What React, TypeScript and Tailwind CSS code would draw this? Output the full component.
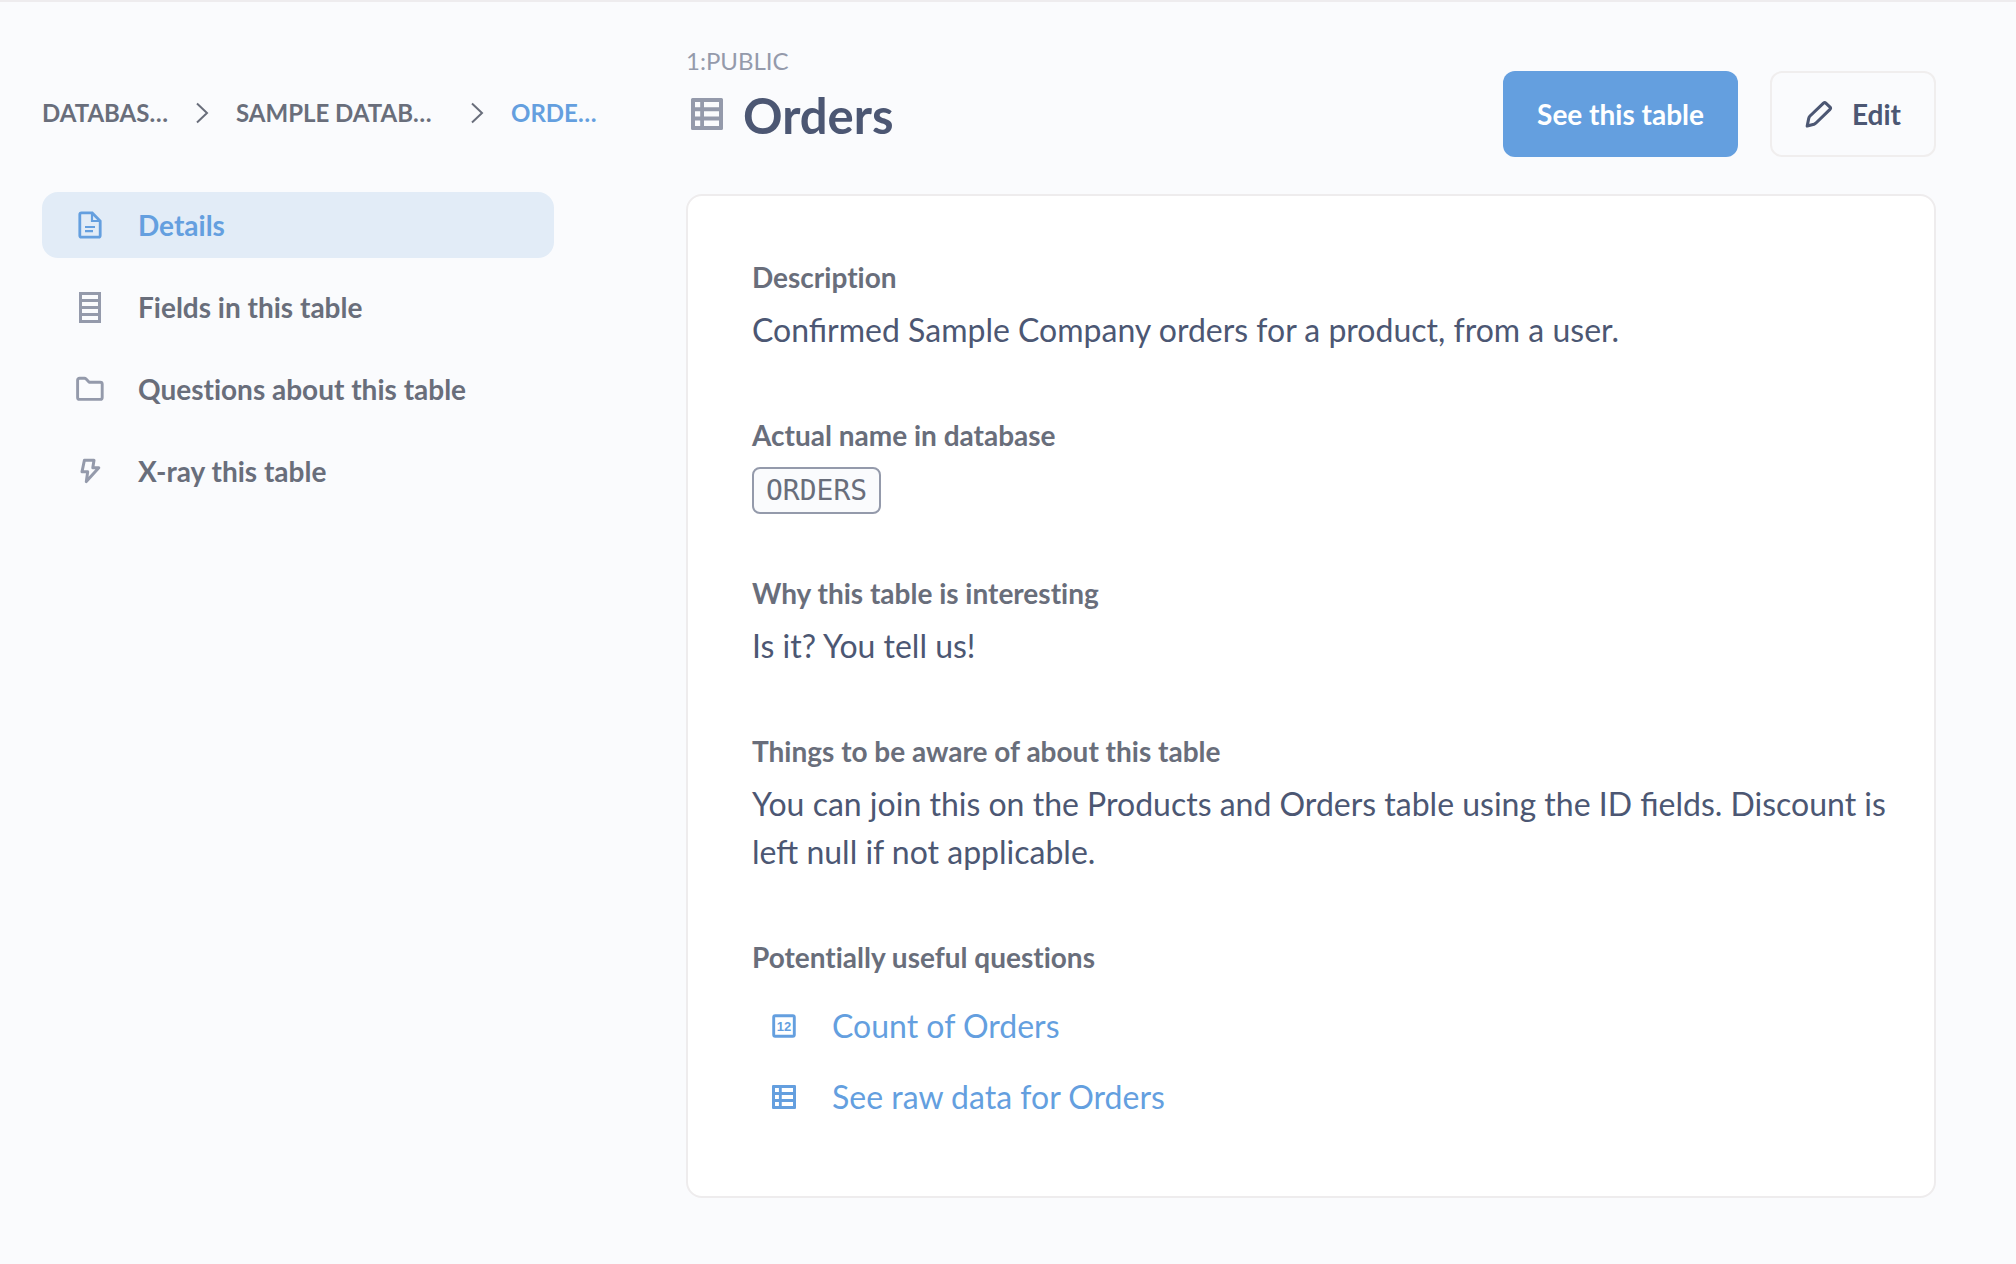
import type { ReactNode } from "react";

function TableIcon({ className }: { className: string }) {
  return (
    <svg viewBox="0 0 32 32" className={className} fill="currentColor" aria-hidden="true">
      <path
        fillRule="evenodd"
        d="M1.5 0h29A1.5 1.5 0 0 1 32 1.5v29a1.5 1.5 0 0 1-1.5 1.5h-29A1.5 1.5 0 0 1 0 30.500V1.500A1.500 1.500 0 0 1 1.500 0ZM4 4v5.300h5.200V4ZM13 4v5.300h15V4ZM4 13.300v5.200h5.200v-5.200ZM13 13.300v5.200h15v-5.200ZM4 22.500V28h5.200v-5.500ZM13 22.500V28h15v-5.500Z"
      />
    </svg>
  );
}

function NumberIcon() {
  return (
    <svg viewBox="0 0 24 24" className="size-6" aria-hidden="true">
      <rect x="1.700" y="1.700" width="20.600" height="20.600" rx="1.500" fill="none" stroke="currentColor" strokeWidth="2.900" />
      <text x="12" y="16.600" textAnchor="middle" fontSize="13" className="font-['Liberation_Sans',sans-serif] font-bold" fill="currentColor">
        12
      </text>
    </svg>
  );
}

function DocumentIcon() {
  return (
    <svg viewBox="0 0 32 32" className="size-8" fill="none" stroke="currentColor" strokeWidth="2.800" aria-hidden="true">
      <path d="M7.500 3.900h10.700l8 8.200v14.400a1.700 1.700 0 0 1-1.700 1.700h-17a1.700 1.700 0 0 1-1.700-1.700V5.600a1.700 1.700 0 0 1 1.700-1.700Z" />
      <path d="M18 4v8h8" strokeWidth="2.200" />
      <path d="M11 18h10M11 22.200h8" strokeWidth="2.200" />
    </svg>
  );
}

function FieldsIcon() {
  return (
    <svg viewBox="0 0 32 32" className="size-8" fill="none" stroke="currentColor" strokeWidth="3" aria-hidden="true">
      <path d="M6.500 2.500h19v28h-19ZM6.500 9.500h19M6.500 16.500h19M6.500 23.500h19" />
    </svg>
  );
}

function FolderIcon() {
  return (
    <svg viewBox="0 0 32 32" className="size-8" fill="none" stroke="currentColor" strokeWidth="2.900" strokeLinejoin="round" aria-hidden="true">
      <path d="M3.600 7.200a1.900 1.900 0 0 1 1.900-1.900h4.900q1 0 1.700.7l3.100 3.200h11.100a1.900 1.900 0 0 1 1.900 1.900v13.400a1.900 1.900 0 0 1-1.900 1.900H5.500a1.900 1.900 0 0 1-1.900-1.900Z" />
    </svg>
  );
}

function BoltIcon() {
  return (
    <svg viewBox="0 0 32 32" className="size-8" fill="none" stroke="currentColor" strokeWidth="3" strokeLinejoin="round" aria-hidden="true">
      <path d="M10.400 5.300H20l-1.200 7.500h6L12.300 26.600l1.400-9.800H8Z" />
    </svg>
  );
}

function PencilIcon() {
  return (
    <svg viewBox="0 0 28 28" className="size-7" fill="none" stroke="currentColor" strokeWidth="3.100" strokeLinejoin="round" aria-hidden="true">
      <path d="M2.200 26 3.700 18.500Q4 17 5 16L18.500 3.100q1.200-1 2.300 0l4.200 4q1 1.100 0 2.200L11.500 22.500q-1.200 1.200-2.500 1.700Z" />
    </svg>
  );
}

function Chevron() {
  return (
    <svg viewBox="0 0 14 22" className="mx-[27px] h-[22px] w-3.5 shrink-0" fill="none" stroke="currentColor" strokeWidth="2" aria-hidden="true">
      <path d="M2 1.500 12 11 2 20.500" />
    </svg>
  );
}

function NavItem({ icon, label, active = false }: { icon: ReactNode; label: string; active?: boolean }) {
  return (
    <li>
      <a
        href="#"
        aria-current={active ? "page" : undefined}
        className={
          active
            ? "flex h-[66px] items-center gap-8 rounded-2xl bg-[#e2ecf7] px-8 text-[#649fdf]"
            : "flex h-[66px] items-center gap-8 rounded-2xl px-8 text-[#949aab]"
        }
      >
        {icon}
        <span className={active ? "text-[28px] font-bold" : "text-[28px] font-bold text-[#696e7b] [font-variant-ligatures:none]"}>
          {label}
        </span>
      </a>
    </li>
  );
}

function Section({ title, children }: { title: string; children: ReactNode }) {
  return (
    <section>
      <h2 className="text-[28px] leading-[34px] font-bold text-[#696e7b] [font-variant-ligatures:none]">{title}</h2>
      {children}
    </section>
  );
}

function Body({ children }: { children: ReactNode }) {
  return <p className="pt-3 pb-16 text-[32px] leading-[48px]">{children}</p>;
}

function QuestionLink({ icon, label }: { icon: ReactNode; label: string }) {
  return (
    <li>
      <a href="#" className="flex items-center gap-9 pl-5 text-[32px] leading-[48px] text-[#649fdf]">
        {icon}
        {label}
      </a>
    </li>
  );
}

export default function App() {
  return (
    <div className="flex min-h-screen border-t-2 border-[#eeecee] bg-[#fafbfd] pr-20 pl-[42px] font-[Lato,sans-serif] text-[#4c5773]">
      <aside className="w-[644px] shrink-0 pt-[95px]">
        <nav aria-label="Breadcrumb" className="flex items-center text-2xl font-bold whitespace-nowrap text-[#696e7b]">
          <a href="#" className="w-[126px]">DATABAS…</a>
          <Chevron />
          <a href="#" className="w-[207px]">SAMPLE DATAB…</a>
          <Chevron />
          <span aria-current="page" className="text-[#649fdf]">ORDE…</span>
        </nav>
        <ul className="mt-[63px] flex w-[512px] flex-col gap-4">
          <NavItem icon={<DocumentIcon />} label="Details" active />
          <NavItem icon={<FieldsIcon />} label="Fields in this table" />
          <NavItem icon={<FolderIcon />} label="Questions about this table" />
          <NavItem icon={<BoltIcon />} label="X-ray this table" />
        </ul>
      </aside>

      <main className="min-w-0 flex-1 pt-[43px] pb-16">
        <header className="flex items-end justify-between">
          <div className="pb-1.5">
            <div className="text-2xl text-[#949aab]">1:PUBLIC</div>
            <div className="flex h-[74px] items-center gap-5 pl-[5px]">
              <TableIcon className="size-8 text-[#949aab]" />
              <h1 className="pt-0.5 text-[49px] leading-[60px] font-bold">Orders</h1>
            </div>
          </div>
          <div className="flex gap-8">
            <button type="button" className="h-[86px] rounded-xl bg-[#649fdf] px-[34px] text-[28px] font-bold text-white">
              See this table
            </button>
            <button type="button" className="flex h-[86px] items-center gap-[19px] rounded-xl border-2 border-[#f0eeee] px-[33px] text-[28px] font-bold">
              <PencilIcon />
              Edit
            </button>
          </div>
        </header>

        <div className="mt-[37px] rounded-2xl border-2 border-[#eeeced] bg-white pt-16 pr-10 pb-[75px] pl-16">
          <Section title="Description">
            <Body>Confirmed Sample Company orders for a product, from a user.</Body>
          </Section>
          <Section title="Actual name in database">
            <div className="flex pt-[15px] pb-[62px]">
              <code className="flex h-[47px] items-center rounded-lg border-2 border-[#949aab] bg-[#fafbfd] px-3 font-['DejaVu_Sans_Mono',monospace] text-[28px] text-[#696e7b]">
                ORDERS
              </code>
            </div>
          </Section>
          <Section title="Why this table is interesting">
            <Body>Is it? You tell us!</Body>
          </Section>
          <Section title="Things to be aware of about this table">
            <Body>
              You can join this on the Products and Orders table using the ID fields. Discount is left null if not applicable.
            </Body>
          </Section>
          <Section title="Potentially useful questions">
            <ul className="mt-7 flex flex-col gap-[23px]">
              <QuestionLink icon={<NumberIcon />} label="Count of Orders" />
              <QuestionLink icon={<TableIcon className="size-6" />} label="See raw data for Orders" />
            </ul>
          </Section>
        </div>
      </main>
    </div>
  );
}
